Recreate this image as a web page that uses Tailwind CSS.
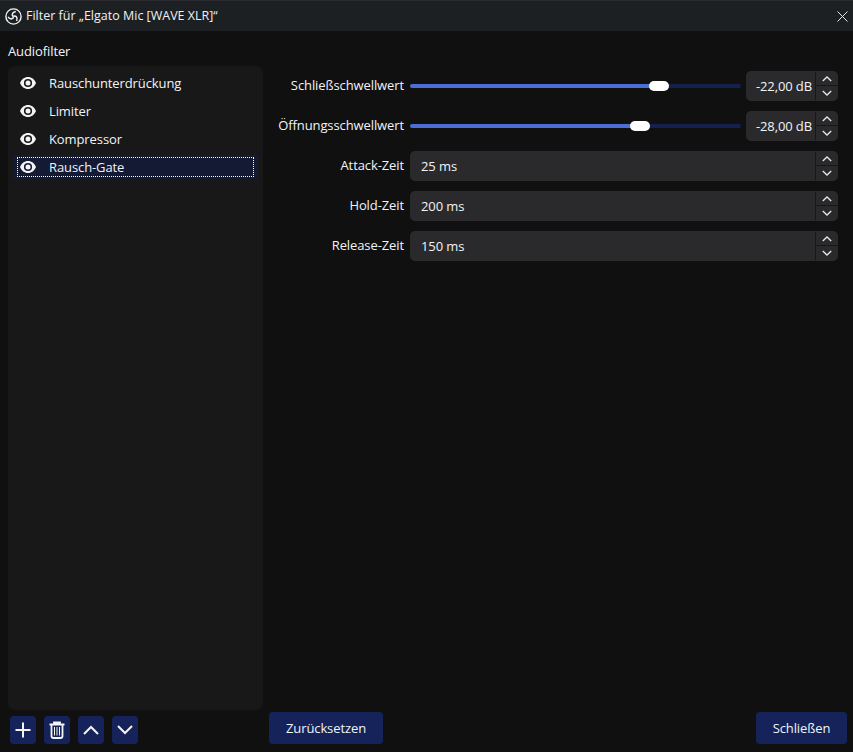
<!DOCTYPE html>
<html lang="de">
<head>
<meta charset="utf-8">
<script src="https://cdn.jsdelivr.net/npm/@tailwindcss/browser@4"></script>
</head>
<body class="m-0 bg-[#101010]">
<div class="w-[853px] h-[752px] overflow-hidden flex flex-col bg-[#101010] text-[#f0f4f8] text-[13px] tracking-[-0.1px] font-['Open_Sans','Noto_Sans',sans-serif]">
  <header class="h-[31px] shrink-0 flex items-center bg-[#1d2022] border-t border-t-[#2a2a30]">
    <svg class="ml-[5px] w-[17px] h-[17px]" viewBox="0 0 17 17" fill="none" stroke="#f2f2f2"><circle cx="8.500" cy="8.500" r="7.600" stroke-width="1.400"/><g stroke-width="1.500"><path d="M8.500 8.500C6.600 7.400 6.600 4.200 10.800 3.500"/><path transform="rotate(120 8.500 8.500)" d="M8.500 8.500C6.600 7.400 6.600 4.200 10.800 3.500"/><path transform="rotate(240 8.500 8.500)" d="M8.500 8.500C6.600 7.400 6.600 4.200 10.800 3.500"/></g></svg>
    <span class="ml-[4px] text-[12.5px] tracking-normal text-[#f0f0f0]">Filter für „Elgato Mic [WAVE XLR]“</span>
    <svg class="ml-auto mr-[5px] w-[11px] h-[11px]" viewBox="0 0 11 11" fill="none" stroke="#e8e8e8" stroke-width="1"><path d="M.5.5l10 10M10.500.5l-10 10"/></svg>
  </header>

  <main class="flex-1 min-h-0 flex flex-col pl-[8px] pr-[6px]">
    <div class="flex-1 min-h-0 flex">
      <section class="w-[255px] shrink-0 flex flex-col">
        <div class="h-[35px] flex items-center pt-[6px]">Audiofilter</div>
        <ul class="flex-1 rounded-[7px] bg-[#181818] px-[5px] pt-[3px] flex flex-col">
          <li class="h-[28px] flex items-center pl-[7px] gap-[13px]">
            <svg class="w-[16px] h-[12px]" viewBox="0 0 16 12"><path fill-rule="evenodd" fill="#f4f4f4" d="M8 0c3.600 0 6.500 2.300 8 6-1.500 3.700-4.400 6-8 6s-6.500-2.300-8-6c1.500-3.700 4.400-6 8-6zm0 1.900a4.100 4.100 0 1 0 0 8.200 4.100 4.100 0 0 0 0-8.200z"/><circle cx="8" cy="6" r="2.500" fill="#f4f4f4"/></svg>
            <span class="pt-[2px]">Rauschunterdrückung</span>
          </li>
          <li class="h-[28px] flex items-center pl-[7px] gap-[13px]">
            <svg class="w-[16px] h-[12px]" viewBox="0 0 16 12"><path fill-rule="evenodd" fill="#f4f4f4" d="M8 0c3.600 0 6.500 2.300 8 6-1.500 3.700-4.400 6-8 6s-6.500-2.300-8-6c1.500-3.700 4.400-6 8-6zm0 1.900a4.100 4.100 0 1 0 0 8.200 4.100 4.100 0 0 0 0-8.200z"/><circle cx="8" cy="6" r="2.500" fill="#f4f4f4"/></svg>
            <span class="pt-[2px]">Limiter</span>
          </li>
          <li class="h-[28px] flex items-center pl-[7px] gap-[13px]">
            <svg class="w-[16px] h-[12px]" viewBox="0 0 16 12"><path fill-rule="evenodd" fill="#f4f4f4" d="M8 0c3.600 0 6.500 2.300 8 6-1.500 3.700-4.400 6-8 6s-6.500-2.300-8-6c1.500-3.700 4.400-6 8-6zm0 1.900a4.100 4.100 0 1 0 0 8.200 4.100 4.100 0 0 0 0-8.200z"/><circle cx="8" cy="6" r="2.500" fill="#f4f4f4"/></svg>
            <span class="pt-[2px]">Kompressor</span>
          </li>
          <li class="h-[24px] mt-[2px] flex items-center rounded-[3px] bg-[#141a33] px-[4px] py-[2px]">
            <div class="w-full h-full flex items-center pl-[2px] gap-[13px] border border-dotted border-white">
              <svg class="w-[16px] h-[12px]" viewBox="0 0 16 12"><path fill-rule="evenodd" fill="#f4f4f4" d="M8 0c3.600 0 6.500 2.300 8 6-1.500 3.700-4.400 6-8 6s-6.500-2.300-8-6c1.500-3.700 4.400-6 8-6zm0 1.900a4.100 4.100 0 1 0 0 8.200 4.100 4.100 0 0 0 0-8.200z"/><circle cx="8" cy="6" r="2.500" fill="#f4f4f4"/></svg>
              <span class="pt-[2px]">Rausch-Gate</span>
            </div>
          </li>
        </ul>
      </section>

      <section class="flex-1 pt-[40px] pl-[7px] pr-[9px] flex flex-col gap-[10px]">
        <div class="h-[30px] flex items-center">
          <label class="w-[134px] mr-[6px] text-right">Schließschwellwert</label>
          <div class="flex-1 mr-[5px] flex items-center h-[14px]">
            <div class="h-[4px] w-[244px] rounded-l-full bg-[#4a6ed4]"></div>
            <div class="w-[20px] h-[10px] -mx-[5px] rounded-[5px] bg-white relative"></div>
            <div class="h-[4px] flex-1 rounded-r-full bg-[#14204f]"></div>
          </div>
          <div class="w-[92px] h-[30px] rounded-[5px] bg-[#2a2a2d] flex">
            <div class="flex-1 flex items-center justify-end pr-[3px] pt-[2px]">-22,00 dB</div>
            <div class="w-[23px] flex flex-col border-l border-[#17171a] my-[1px]">
              <div class="h-[14px] flex items-center justify-center border-b border-[#17171a]"><svg class="w-[10px] h-[6px]" viewBox="0 0 10 6" fill="none" stroke="#e8e8e8" stroke-width="1.300"><path d="M.8 5L5 1l4.200 4"/></svg></div>
              <div class="flex-1 flex items-center justify-center"><svg class="w-[10px] h-[6px]" viewBox="0 0 10 6" fill="none" stroke="#e8e8e8" stroke-width="1.300"><path d="M.8 1L5 5l4.200-4"/></svg></div>
            </div>
          </div>
        </div>
        <div class="h-[30px] flex items-center">
          <label class="w-[134px] mr-[6px] text-right">Öffnungsschwellwert</label>
          <div class="flex-1 mr-[5px] flex items-center h-[14px]">
            <div class="h-[4px] w-[225px] rounded-l-full bg-[#4a6ed4]"></div>
            <div class="w-[20px] h-[10px] -mx-[5px] rounded-[5px] bg-white relative"></div>
            <div class="h-[4px] flex-1 rounded-r-full bg-[#14204f]"></div>
          </div>
          <div class="w-[92px] h-[30px] rounded-[5px] bg-[#2a2a2d] flex">
            <div class="flex-1 flex items-center justify-end pr-[3px] pt-[2px]">-28,00 dB</div>
            <div class="w-[23px] flex flex-col border-l border-[#17171a] my-[1px]">
              <div class="h-[14px] flex items-center justify-center border-b border-[#17171a]"><svg class="w-[10px] h-[6px]" viewBox="0 0 10 6" fill="none" stroke="#e8e8e8" stroke-width="1.300"><path d="M.8 5L5 1l4.200 4"/></svg></div>
              <div class="flex-1 flex items-center justify-center"><svg class="w-[10px] h-[6px]" viewBox="0 0 10 6" fill="none" stroke="#e8e8e8" stroke-width="1.300"><path d="M.8 1L5 5l4.200-4"/></svg></div>
            </div>
          </div>
        </div>
        <div class="h-[30px] flex items-center">
          <label class="w-[134px] mr-[6px] text-right">Attack-Zeit</label>
          <div class="flex-1 h-[30px] rounded-[5px] bg-[#2a2a2d] flex">
            <div class="flex-1 flex items-center pl-[11px] pt-[2px]">25 ms</div>
            <div class="w-[23px] flex flex-col border-l border-[#17171a] my-[1px]">
              <div class="h-[14px] flex items-center justify-center border-b border-[#17171a]"><svg class="w-[10px] h-[6px]" viewBox="0 0 10 6" fill="none" stroke="#e8e8e8" stroke-width="1.300"><path d="M.8 5L5 1l4.200 4"/></svg></div>
              <div class="flex-1 flex items-center justify-center"><svg class="w-[10px] h-[6px]" viewBox="0 0 10 6" fill="none" stroke="#e8e8e8" stroke-width="1.300"><path d="M.8 1L5 5l4.200-4"/></svg></div>
            </div>
          </div>
        </div>
        <div class="h-[30px] flex items-center">
          <label class="w-[134px] mr-[6px] text-right">Hold-Zeit</label>
          <div class="flex-1 h-[30px] rounded-[5px] bg-[#2a2a2d] flex">
            <div class="flex-1 flex items-center pl-[11px] pt-[2px]">200 ms</div>
            <div class="w-[23px] flex flex-col border-l border-[#17171a] my-[1px]">
              <div class="h-[14px] flex items-center justify-center border-b border-[#17171a]"><svg class="w-[10px] h-[6px]" viewBox="0 0 10 6" fill="none" stroke="#e8e8e8" stroke-width="1.300"><path d="M.8 5L5 1l4.200 4"/></svg></div>
              <div class="flex-1 flex items-center justify-center"><svg class="w-[10px] h-[6px]" viewBox="0 0 10 6" fill="none" stroke="#e8e8e8" stroke-width="1.300"><path d="M.8 1L5 5l4.200-4"/></svg></div>
            </div>
          </div>
        </div>
        <div class="h-[30px] flex items-center">
          <label class="w-[134px] mr-[6px] text-right">Release-Zeit</label>
          <div class="flex-1 h-[30px] rounded-[5px] bg-[#2a2a2d] flex">
            <div class="flex-1 flex items-center pl-[11px] pt-[2px]">150 ms</div>
            <div class="w-[23px] flex flex-col border-l border-[#17171a] my-[1px]">
              <div class="h-[14px] flex items-center justify-center border-b border-[#17171a]"><svg class="w-[10px] h-[6px]" viewBox="0 0 10 6" fill="none" stroke="#e8e8e8" stroke-width="1.300"><path d="M.8 5L5 1l4.200 4"/></svg></div>
              <div class="flex-1 flex items-center justify-center"><svg class="w-[10px] h-[6px]" viewBox="0 0 10 6" fill="none" stroke="#e8e8e8" stroke-width="1.300"><path d="M.8 1L5 5l4.200-4"/></svg></div>
            </div>
          </div>
        </div>
      </section>
    </div>

    <footer class="h-[42px] shrink-0 flex items-end pb-[8px]">
      <div class="w-[261px] pl-[2px] flex gap-[8px]">
        <button class="w-[26px] h-[28px] rounded-[4px] bg-[#15235a] flex items-center justify-center"><svg class="w-[16px] h-[16px]" viewBox="0 0 16 16" fill="none" stroke="#f4f4f4" stroke-width="2"><path d="M8 .5v15M.5 8h15"/></svg></button>
        <button class="w-[26px] h-[28px] rounded-[4px] bg-[#15235a] flex items-center justify-center"><svg class="w-[16px] h-[18px]" viewBox="0 0 16 18" fill="none" stroke="#f4f4f4"><path stroke-width="1.800" d="M.5 3.500h15M5 3.500V1.500h6v2"/><path stroke-width="1.800" d="M2.500 3.500v11.500a2 2 0 0 0 2 2h7a2 2 0 0 0 2-2V3.500"/><path stroke-width="1" d="M5.500 6v8.500M8 6v8.500M10.500 6v8.500"/></svg></button>
        <button class="w-[26px] h-[28px] rounded-[4px] bg-[#15235a] flex items-center justify-center"><svg class="w-[16px] h-[10px]" viewBox="0 0 16 10" fill="none" stroke="#f4f4f4" stroke-width="2"><path d="M1 9l7-7 7 7"/></svg></button>
        <button class="w-[26px] h-[28px] rounded-[4px] bg-[#15235a] flex items-center justify-center"><svg class="w-[16px] h-[10px]" viewBox="0 0 16 10" fill="none" stroke="#f4f4f4" stroke-width="2"><path d="M1 1l7 7 7-7"/></svg></button>
      </div>
      <button class="w-[114px] h-[32px] rounded-[4px] bg-[#15235a] flex items-center justify-center pt-[2px]">Zurücksetzen</button>
      <button class="ml-auto w-[91px] h-[32px] rounded-[4px] bg-[#15235a] flex items-center justify-center pt-[2px]">Schließen</button>
    </footer>
  </main>
</div>
</body>
</html>
